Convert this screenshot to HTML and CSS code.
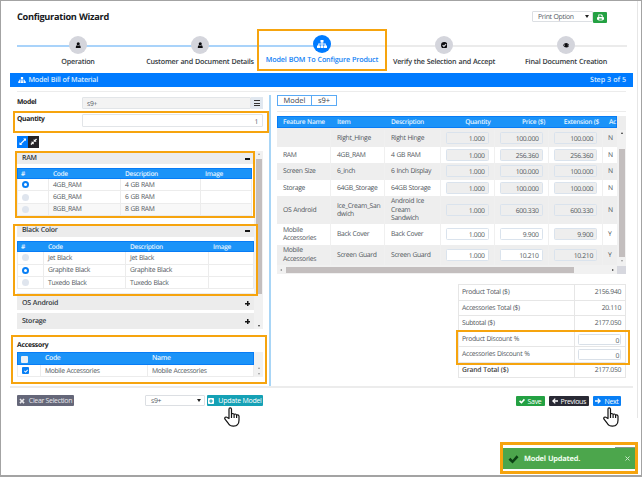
FILE: index.html
```html
<!DOCTYPE html>
<html lang="en">
<head>
<meta charset="utf-8">
<title>Configuration Wizard</title>
<link rel="stylesheet" href="styles.css">
</head>
<body>
<svg class="defs" width="0" height="0">
  <symbol id="user" viewBox="0 0 16 16"><circle cx="8" cy="4.5" r="3.8"/><path d="M2 15v-3q0-4 3-4 3 2 6 0 3 0 3 4v3z"/></symbol>
  <symbol id="tree" viewBox="0 0 20 16"><path d="M7 0h6v5h-2v2h6.500v4H20v5h-6v-5h1.500V9H11v2h2v5H7v-5h2V9H4.500v2H6v5H0v-5h2.500V7H9V5H7z"/></symbol>
  <symbol id="check" viewBox="0 0 16 16"><path d="M0 9l3-3 3.500 3.500L13 2l3 3-9.500 10z"/></symbol>
  <symbol id="checkc" viewBox="0 0 16 16"><path fill-rule="evenodd" d="M8 0a8 8 0 1 0 0 16A8 8 0 0 0 8 0zM3 8.500l2-2 2.200 2.200L11.500 4l2 2-6.300 7z"/></symbol>
  <symbol id="eye" viewBox="0 0 20 14"><path fill-rule="evenodd" d="M0 7q4-7 10-7t10 7q-4 7-10 7T0 7zm2 0q2 3 5 4.200A5 5 0 0 1 7 2.800Q4 4 2 7zm11-4.200a5 5 0 0 1 0 8.400Q16 10 18 7q-2-3-5-4.200z"/></symbol>
  <symbol id="print" viewBox="0 0 16 16"><path fill-rule="evenodd" d="M3 1h8l2 2v4h1q2 0 2 2v4h-3v2H3v-2H0V9q0-2 2-2h1zm2 2v4h6V4.500H9.500V3zm0 7.500V13h6v-2.500z"/></symbol>
  <symbol id="expand" viewBox="0 0 16 16"><path d="M9 1h6v6l-2-2-8 8 2 2H1V9l2 2 8-8z"/></symbol>
  <symbol id="compress" viewBox="0 0 16 16"><path d="M15 3l-3 3 2 2H8V2l2 2 3-3zM1 13l3-3-2-2h6v6l-2-2-3 3z"/></symbol>
  <symbol id="cross" viewBox="0 0 16 16"><path d="M1 4l3-3 4 4 4-4 3 3-4 4 4 4-3 3-4-4-4 4-3-3 4-4z"/></symbol>
  <symbol id="plusbox" viewBox="0 0 16 16"><path fill-rule="evenodd" d="M2 0h12q2 0 2 2v12q0 2-2 2H2q-2 0-2-2V2q0-2 2-2zm4.500 3v3.500H3v3h3.500V13h3V9.500H13v-3H9.500V3z"/></symbol>
  <symbol id="left" viewBox="0 0 16 16"><path d="M0 8l7.500-7.500 2.300 2.300L6.500 6.200H16v3.600H6.500l3.300 3.400-2.300 2.300z"/></symbol>
  <symbol id="right" viewBox="0 0 16 16"><path d="M16 8L8.500.5 6.200 2.800l3.300 3.400H0v3.600h9.500l-3.300 3.400 2.300 2.300z"/></symbol>
  <symbol id="hand" viewBox="0 0 16 20"><path fill="#fff" stroke="#111" stroke-width="1.200" stroke-linejoin="round" d="M5 11.500V2.300Q5 .8 6.200.8t1.300 1.500v5.200q.3-1 1.300-1t1.300 1.200q.2-.8 1.200-.7t1.300 1.300q.3-.6 1.200-.5t1.200 1.400v4q0 3-1.500 4.500-1 1.500-4 1.500-3.500 0-5-2.500L1 12.200q-.7-1.200.3-1.900t2 .2zM7.500 7.500V11M10.100 8v3M12.600 8.500V11"/></symbol>
</svg>
<div class="page">
  <header class="top">
    <h1>Configuration Wizard</h1>
    <div class="print"><div class="select"><span>Print Option</span><i class="caret"></i></div><button class="btn-print"><svg><use href="#print"/></svg></button></div>
  </header>

  <nav class="steps">
    <div class="step done"><b><svg><use href="#user"/></svg></b><span>Operation</span></div>
    <div class="step done"><b><svg><use href="#user"/></svg></b><span>Customer and Document Details</span></div>
    <div class="step active"><b><svg><use href="#tree"/></svg></b><span>Model BOM To Configure Product</span></div>
    <div class="step"><b><svg><use href="#checkc"/></svg></b><span>Verify the Selection and Accept</span></div>
    <div class="step"><b><svg><use href="#eye"/></svg></b><span>Final Document Creation</span></div>
  </nav>

  <div class="titlebar"><svg><use href="#tree"/></svg><span>Model Bill of Material</span><span class="count">Step 3 of 5</span></div>

  <main class="cols">
    <section class="left">
      <div class="field"><label>Model</label><div class="input model">s9+</div><div class="burger"><i></i><i></i><i></i></div></div>
      <div class="field qty"><label>Quantity</label><div class="input num">1</div></div>
      <div class="tools"><span class="t-blue"><svg><use href="#expand"/></svg></span><span class="t-dark"><svg><use href="#compress"/></svg></span></div>
      <div class="scroller">
        <div class="list">
          <div class="acc ram"><span>RAM</span><i class="minus"></i></div>
          <div class="grid g-ram">
            <div class="tr th"><span>#</span><span>Code</span><span>Description</span><span>Image</span></div>
            <div class="tr"><span><i class="radio on"></i></span><span>4GB_RAM</span><span>4 GB RAM</span><span></span></div>
            <div class="tr"><span><i class="radio"></i></span><span>6GB_RAM</span><span>6 GB RAM</span><span></span></div>
            <div class="tr alt"><span><i class="radio"></i></span><span>8GB_RAM</span><span>8 GB RAM</span><span></span></div>
          </div>
          <div class="acc black"><span>Black Color</span><i class="minus"></i></div>
          <div class="grid g-black">
            <div class="tr th"><span>#</span><span>Code</span><span>Description</span><span>Image</span></div>
            <div class="tr"><span><i class="radio"></i></span><span>Jet Black</span><span>Jet Black</span><span></span></div>
            <div class="tr"><span><i class="radio on"></i></span><span>Graphite Black</span><span>Graphite Black</span><span></span></div>
            <div class="tr"><span><i class="radio"></i></span><span>Tuxedo Black</span><span>Tuxedo Black</span><span></span></div>
          </div>
          <div class="acc os"><span>OS Android</span><i class="plus"></i></div>
          <div class="acc storage"><span>Storage</span><i class="plus"></i></div>
        </div>
        <div class="vbar"><i class="up"></i><i class="thumb"></i><i class="down dark"></i></div>
      </div>
      <h2>Accessory</h2>
      <div class="accessory">
        <div class="grid g-acc">
          <div class="tr th"><span><i class="box"></i></span><span>Code</span><span>Name</span></div>
          <div class="tr"><span><i class="box on"><svg><use href="#check"/></svg></i></span><span>Mobile Accessories</span><span>Mobile Accessories</span></div>
        </div>
        <div class="mini"><i class="up"></i><i class="down"></i></div>
      </div>
    </section>
    <div class="divider"></div>
    <section class="right">
      <div class="tabs"><span>Model</span><span>s9+</span></div>
      <div class="bom">
        <div class="bom-row head"><span>Feature Name</span><span>Item</span><span>Description</span><span>Quantity</span><span>Price ($)</span><span>Extension ($</span><span>Ac</span></div>
        <div class="bom-main">
          <div class="bom-body">
            <div class="bom-row g"><span></span><span>Right_Hinge</span><span>Right Hinge</span><span><b>1.000</b></span><span><b>100.000</b></span><span><b>100.000</b></span><span>N</span></div>
            <div class="bom-row"><span>RAM</span><span>4GB_RAM</span><span>4 GB RAM</span><span><b>1.000</b></span><span><b>256.360</b></span><span><b>256.360</b></span><span>N</span></div>
            <div class="bom-row g"><span>Screen Size</span><span>6_inch</span><span>6 Inch Display</span><span><b>1.000</b></span><span><b>100.000</b></span><span><b>100.000</b></span><span>N</span></div>
            <div class="bom-row"><span>Storage</span><span>64GB_Storage</span><span>64GB Storage</span><span><b>1.000</b></span><span><b>100.000</b></span><span><b>100.000</b></span><span>N</span></div>
            <div class="bom-row g tall"><span>OS Android</span><span>Ice_Cream_San<br>dwich</span><span>Android Ice<br>Cream<br>Sandwich</span><span><b>1.000</b></span><span><b>600.330</b></span><span><b>600.330</b></span><span>N</span></div>
            <div class="bom-row two"><span>Mobile<br>Accessories</span><span>Back Cover</span><span>Back Cover</span><span><b class="w">1.000</b></span><span><b class="w">9.900</b></span><span><b>9.900</b></span><span>Y</span></div>
            <div class="bom-row g two"><span>Mobile<br>Accessories</span><span>Screen Guard</span><span>Screen Guard</span><span><b class="w">1.000</b></span><span><b class="w">10.210</b></span><span><b>10.210</b></span><span>Y</span></div>
          </div>
          <div class="bom-v"><i class="up dark"></i><i class="thumb"></i><i class="down"></i></div>
        </div>
        <div class="bom-h"><i class="lt"></i><i class="thumb"></i><i class="rt"></i><i class="corner"></i></div>
      </div>
      <div class="totals">
        <div><span>Product Total ($)</span><em>2156.940</em></div>
        <div><span>Accessories Total ($)</span><em>20.110</em></div>
        <div><span>Subtotal ($)</span><em>2177.050</em></div>
        <div><span>Product Discount %</span><em><b>0</b></em></div>
        <div><span>Accessories Discount %</span><em><b>0</b></em></div>
        <div class="grand"><span>Grand Total ($)</span><em>2177.050</em></div>
      </div>
    </section>
  </main>

  <footer class="actions">
    <button class="btn clear"><svg><use href="#cross"/></svg>Clear Selection</button>
    <div class="select s2"><span>s9+</span><i class="caret"></i></div>
    <button class="btn update"><svg><use href="#plusbox"/></svg>Update Model</button>
    <div class="nav">
      <button class="btn save"><svg><use href="#check"/></svg>Save</button>
      <button class="btn prev"><svg><use href="#left"/></svg>Previous</button>
      <button class="btn next"><svg><use href="#right"/></svg>Next</button>
    </div>
  </footer>

  <div class="edge"></div>
  <div class="toast-shade"></div>
  <div class="toast"><svg><use href="#check"/></svg><span>Model Updated.</span><svg class="x" viewBox="0 0 10 10"><path d="M1 1l8 8M9 1l-8 8"/></svg></div>
  <div class="mark m-step"></div>
  <div class="mark m-qty"></div>
  <div class="mark m-ram"></div>
  <div class="mark m-black"></div>
  <div class="mark m-acc"></div>
  <div class="mark m-disc"></div>
  <div class="mark m-toast"></div>
  <svg class="hand h1"><use href="#hand"/></svg>
  <svg class="hand h2"><use href="#hand"/></svg>
</div>
</body>
</html>
```
FILE: styles.css
```css
* { box-sizing: border-box; }
body { margin: 0; font-family: "Open Sans", "Noto Sans", sans-serif; font-size: 6.800px; letter-spacing: -.33px; word-spacing: .4px; color: #51575d; background: #fff; text-rendering: geometricPrecision; }
.defs { position: absolute; }
svg { fill: currentColor; display: block; flex: none; }
i, em { font-style: normal; }
span { white-space: nowrap; }
button { font: inherit; letter-spacing: inherit; border: 0; padding: 0; }
.page { position: relative; width: 642px; height: 477px; overflow: hidden; border: 1px solid #a3a3a3; border-bottom-width: 2px; }

.top { display: flex; justify-content: space-between; padding: 10px 34px 0 16px; height: 33px; }
h1 { margin: 0; font-size: 9.200px; line-height: 12px; font-weight: 700; color: #16191c; letter-spacing: -.3px; }
.print { display: flex; }
.select { width: 61px; height: 11px; border: 1px solid #dcdfe3; border-radius: 1px; display: flex; align-items: center; justify-content: space-between; padding: 1px 3px 0 5px; font-size: 6.900px; line-height: 9px; }
.caret { border: 2px solid transparent; border-top: 3px solid #222; border-bottom: 0; margin-top: -1px; }
.btn-print { width: 14px; height: 11px; margin-top: 1px; background: #24a143; color: #fff; border-radius: 1px; display: grid; place-items: center; }
.btn-print svg { width: 7px; height: 7px; }

.steps { display: grid; grid-template-columns: repeat(5, 1fr); margin: 0 14px 0 16px; height: 39px; background: linear-gradient(90deg, #a9d3fa 50%, #ebebeb 50%) 0 11px / 100% 2px no-repeat; }
.step { display: flex; flex-direction: column; align-items: center; padding-top: 2px; color: #33383d; font-weight: 600; font-size: 7.200px; line-height: 10px; letter-spacing: -.22px; }
.step b { width: 18px; height: 18px; border-radius: 50%; background: #d4d5dc; color: #0c0c0f; display: grid; place-items: center; margin-bottom: 2.500px; }
.step svg { width: 6.500px; height: 6.500px; }
.step.active { color: #1482f5; padding-top: 1px; letter-spacing: -.17px; }
.step.active b { background: #007bff; color: #fff; margin-bottom: 2px; }
.step.active svg { width: 10px; height: 8px; }

.titlebar { margin: 0 8px 0 9px; height: 14px; background: #007bff; color: #d9ecff; display: flex; align-items: center; padding: 0 7px 0 8px; font-size: 7.200px; font-weight: 600; letter-spacing: -.26px; }
.titlebar svg { width: 8px; height: 6px; margin-right: 2.500px; color: #fff; }
.count { margin-left: auto; letter-spacing: -.14px; }

.cols { margin: 4px 8px 0 9px; height: 297px; display: flex; border-bottom: 2px solid #ececec; padding-left: 7px; padding-right: 7px; background: linear-gradient(#ececec, #ececec) 7px 0 / 609px 1px no-repeat; }
.left { width: 246px; padding-top: 6px; }
.field { display: flex; height: 15px; align-items: flex-start; }
label { width: 65px; color: #222; font-weight: 700; font-size: 6.800px; line-height: 9px; }
.input { border: 1px solid #e2e5e8; border-radius: 1px; flex: 1; height: 12px; padding: 0 4px; line-height: 12px; }
.input.model { background: #f3f3f3; }
.input.num { text-align: right; line-height: 13px; }
.qty label { padding-top: 2px; }
.qty .input { height: 13px; margin-top: 2px; }
.qty { height: 24px; }
.burger { width: 12px; height: 12px; background: #e1e8f0; padding: 3px 3px 2px; display: grid; gap: 1px; }
.burger i { background: #333; height: 1px; }
.tools { display: flex; height: 15px; }
.tools span { width: 11px; height: 12px; display: grid; place-items: center; color: #fff; }
.tools svg { width: 7.500px; height: 7.500px; }
.t-blue { background: #007bff; }
.t-dark { background: #252328; }

.scroller { display: flex; height: 178px; }
.list { width: 237px; }
.acc { background: #ececec; display: flex; align-items: center; justify-content: space-between; padding: 0 4px 0 5px; color: #33383d; font-weight: 600; font-size: 7px; line-height: 8px; letter-spacing: -.25px; }
.acc.ram { height: 12px; margin-top: 1px; margin-bottom: 4px; padding-top: 1px; }
.acc.black { height: 12px; margin: 9px 0 4px; }
.acc.os { height: 17px; margin: 4px 0 3px; padding-top: 4px; }
.acc.storage { height: 16px; padding-top: 1px; }
.minus, .plus { width: 5px; height: 2px; background: #151515; }
.plus { height: 5px; background: linear-gradient(#151515, #151515) 0 2px / 5px 1.500px no-repeat, linear-gradient(#151515, #151515) 2px 0 / 1.500px 5px no-repeat; }
.tr { display: grid; height: 12.400px; background: #fff; }
.tr span { border-right: 1px solid #ececec; border-bottom: 1px solid #ececec; padding-left: 4px; display: flex; align-items: center; line-height: 8px; }
.tr span:first-child { border-left: 1px solid #ececec; }
.alt { background: #f8f8f8; }
.tr.th { background: #1b93f8; color: #e5f3ff; font-weight: 600; height: 11px; border: 1px solid #077cf6; font-size: 6.600px; }
.tr.th span { border: 0; padding-left: 3px; }
.g-ram .tr { grid-template-columns: 32px 72px 80px 1fr; }
.g-ram { width: 235px; }
.g-black .tr { grid-template-columns: 27px 82px 83px 1fr; }
.radio { width: 7px; height: 7px; border-radius: 50%; background: #dfe5ee; }
.radio.on { background: #fff; border: 2.200px solid #087ff5; }
.vbar { width: 9px; background: #f1f1f1; display: flex; flex-direction: column; align-items: center; padding: 2px 0; }
.up, .down { border: 1.500px solid transparent; }
.up { border-bottom: 2px solid #999; border-top: 0; }
.down { border-top: 2px solid #999; border-bottom: 0; margin-top: auto; }
.up.dark { border-bottom-color: #333; }
.down.dark { border-top-color: #333; }
.vbar .thumb { width: 6px; height: 135px; background: #c3bebe; margin-top: 4px; }

h2 { margin: 11px 0 3px; font-size: 6.800px; line-height: 9px; color: #222; font-weight: 700; letter-spacing: -.25px; }
.accessory { display: flex; height: 25px; }
.g-acc { width: 237px; }
.g-acc .tr { grid-template-columns: 24px 107px 1fr; }
.g-acc .tr.th { height: 13px; font-size: 6.900px; padding-top: 1px; }
.box { width: 7px; height: 7px; border-radius: 1px; background: #eaf0f6; }
.box.on { background: #087ff5; color: #fff; display: grid; place-items: center; }
.box svg { width: 4px; height: 4px; }
.mini { flex: 1; background: #f1f1f1; display: flex; flex-direction: column; align-items: center; padding: 15px 0 2px; }

.divider { width: 2px; margin: 4px 6px 0; background: #a8d5f6; }
.right { width: 349px; padding-top: 4px; }
.tabs { display: flex; height: 17px; padding-bottom: 5px; border-bottom: 1px solid #ececec; font-size: 7.500px; color: #3c4248; }
.tabs span { width: 35px; border: 1px solid #5aaaf5; display: grid; place-items: center; line-height: 9px; padding-top: 1px; letter-spacing: 0; }
.tabs span + span { width: 26px; margin-left: -1px; }
.bom { margin-top: 4px; height: 158px; background: #ededed; }
.bom-row { display: grid; grid-template-columns: 54px 54px 55.500px 54px 54.500px 54px 14px; width: 340px; height: 16.500px; background: #fff; line-height: 8.500px; }
.bom-row.g { background: #eee; }
.bom-row > span { padding-left: 6px; display: flex; align-items: center; border-right: 1px solid #f0f0f0; overflow: hidden; }
.bom-row > span:last-child { border: 0; padding-left: 5px; }
.bom-row.head { background: #1b93f8; color: #e5f3ff; font-weight: 600; font-size: 6.600px; height: 12px; border: 1px solid #077cf6; padding-top: 1px; margin-bottom: 2px; }
.bom-row.head > span { border: 0; padding-left: 5px; }
.bom-row.head > span:nth-child(n+4):nth-child(-n+6) { justify-content: flex-end; padding: 0 5px 0 0; }
.bom-row b { width: 43px; height: 12px; border: 1px solid #dae3ed; border-radius: 1.500px; background: #eee; font-weight: 400; text-align: right; padding-right: 3px; line-height: 11px; margin-left: -1px; flex: none; }
.bom-row b.w { background: #fff; }
.bom-row.tall { height: 28px; }
.bom-row.two { height: 20.500px; }
.bom-main { display: flex; height: 135px; }
.bom-v { width: 9px; display: flex; flex-direction: column; align-items: center; padding: 2px 0 3px; background: #f1f1f1; }
.bom-v .thumb { width: 6px; height: 108px; background: #c3bebe; margin-top: 15px; }
.bom-h { display: flex; align-items: center; height: 9px; padding-left: 3px; background: #f1f1f1; }
.bom-h .thumb { width: 288px; height: 6px; background: #c3bebe; margin-left: 4px; }
.lt, .rt { border: 1.500px solid transparent; }
.lt { border-right: 2px solid #888; border-left: 0; }
.rt { border-left: 2px solid #333; border-right: 0; margin-left: auto; }
.corner { width: 9px; height: 8px; background: #d7d8df; margin-left: 3px; }

.totals { margin: 10px 0 0 181px; border: 1px solid #e6e6e6; border-bottom: 0; }
.totals div { display: flex; height: 15.500px; border-bottom: 1px solid #e6e6e6; }
.totals span { width: 116px; padding-left: 3px; line-height: 14.500px; border-right: 1px solid #e6e6e6; }
.totals em { flex: 1; text-align: right; padding-right: 4px; line-height: 14.500px; }
.totals b { display: block; width: 43px; height: 11px; border: 1px solid #d9e0e8; border-radius: 1.500px; margin: 2px 0 0 3px; padding-right: 1px; font-weight: 400; line-height: 11px; }
.totals em:has(b) { padding-right: 2px; }
.grand span { font-weight: 600; color: #444; letter-spacing: -.2px; }

.actions { display: flex; padding: 7px 20px 0 16px; height: 30px; align-items: flex-start; }
.btn { height: 11px; border-radius: 1px; color: #fff; display: flex; align-items: center; justify-content: center; gap: 4px; font-size: 7px; line-height: 9px; white-space: nowrap; }
.btn svg { width: 6px; height: 6px; }
.clear { width: 57px; background: #656779; color: #e8e8ec; }
.s2 { width: 60px; margin: 0 2px 0 71px; }
.update { width: 56px; background: #15a1b5; letter-spacing: -.25px; }
.nav { margin-left: auto; display: flex; gap: 4.500px; padding-top: 1px; }
.nav .btn { height: 10px; gap: 3px; }
.save { width: 29px; background: #24a143; }
.prev { width: 39.500px; background: #292a35; }
.next { width: 28px; background: #087ff5; }

.edge { position: absolute; left: 636px; top: 0; width: 1px; height: 417px; background: #e6e6e6; }
.toast, .toast-shade { position: absolute; left: 502px; top: 447px; width: 132px; height: 21px; background: #4ca64c; }
.toast-shade { left: 614px; top: 446px; width: 23px; background: #87988a; }
.toast { display: flex; align-items: center; padding: 0 5px; color: #f0fff0; font-weight: 700; font-size: 7.400px; letter-spacing: -.2px; }
.toast svg { width: 11px; height: 10px; color: #0c4214; margin-right: 5px; }
.toast .x { width: 5px; height: 5px; margin: 0 0 0 auto; stroke: #c5e8c5; stroke-width: 2; }

.mark { position: absolute; border: 2px solid #f6a40e; }
.m-step { left: 256px; top: 28px; width: 130px; height: 42px; }
.m-qty { left: 12px; top: 110px; width: 256px; height: 22px; }
.m-ram { left: 14px; top: 150px; width: 240px; height: 67px; }
.m-black { left: 12px; top: 223px; width: 245px; height: 72px; }
.m-acc { left: 10px; top: 334px; width: 256px; height: 49px; }
.m-disc { left: 455px; top: 329px; width: 174px; height: 35px; }
.m-toast { left: 499px; top: 441px; width: 138px; height: 32px; border-width: 3px; }
.hand { position: absolute; width: 16px; height: 20px; top: 406px; overflow: visible; }
.h1 { left: 223px; }
.h2 { left: 602px; }
```
